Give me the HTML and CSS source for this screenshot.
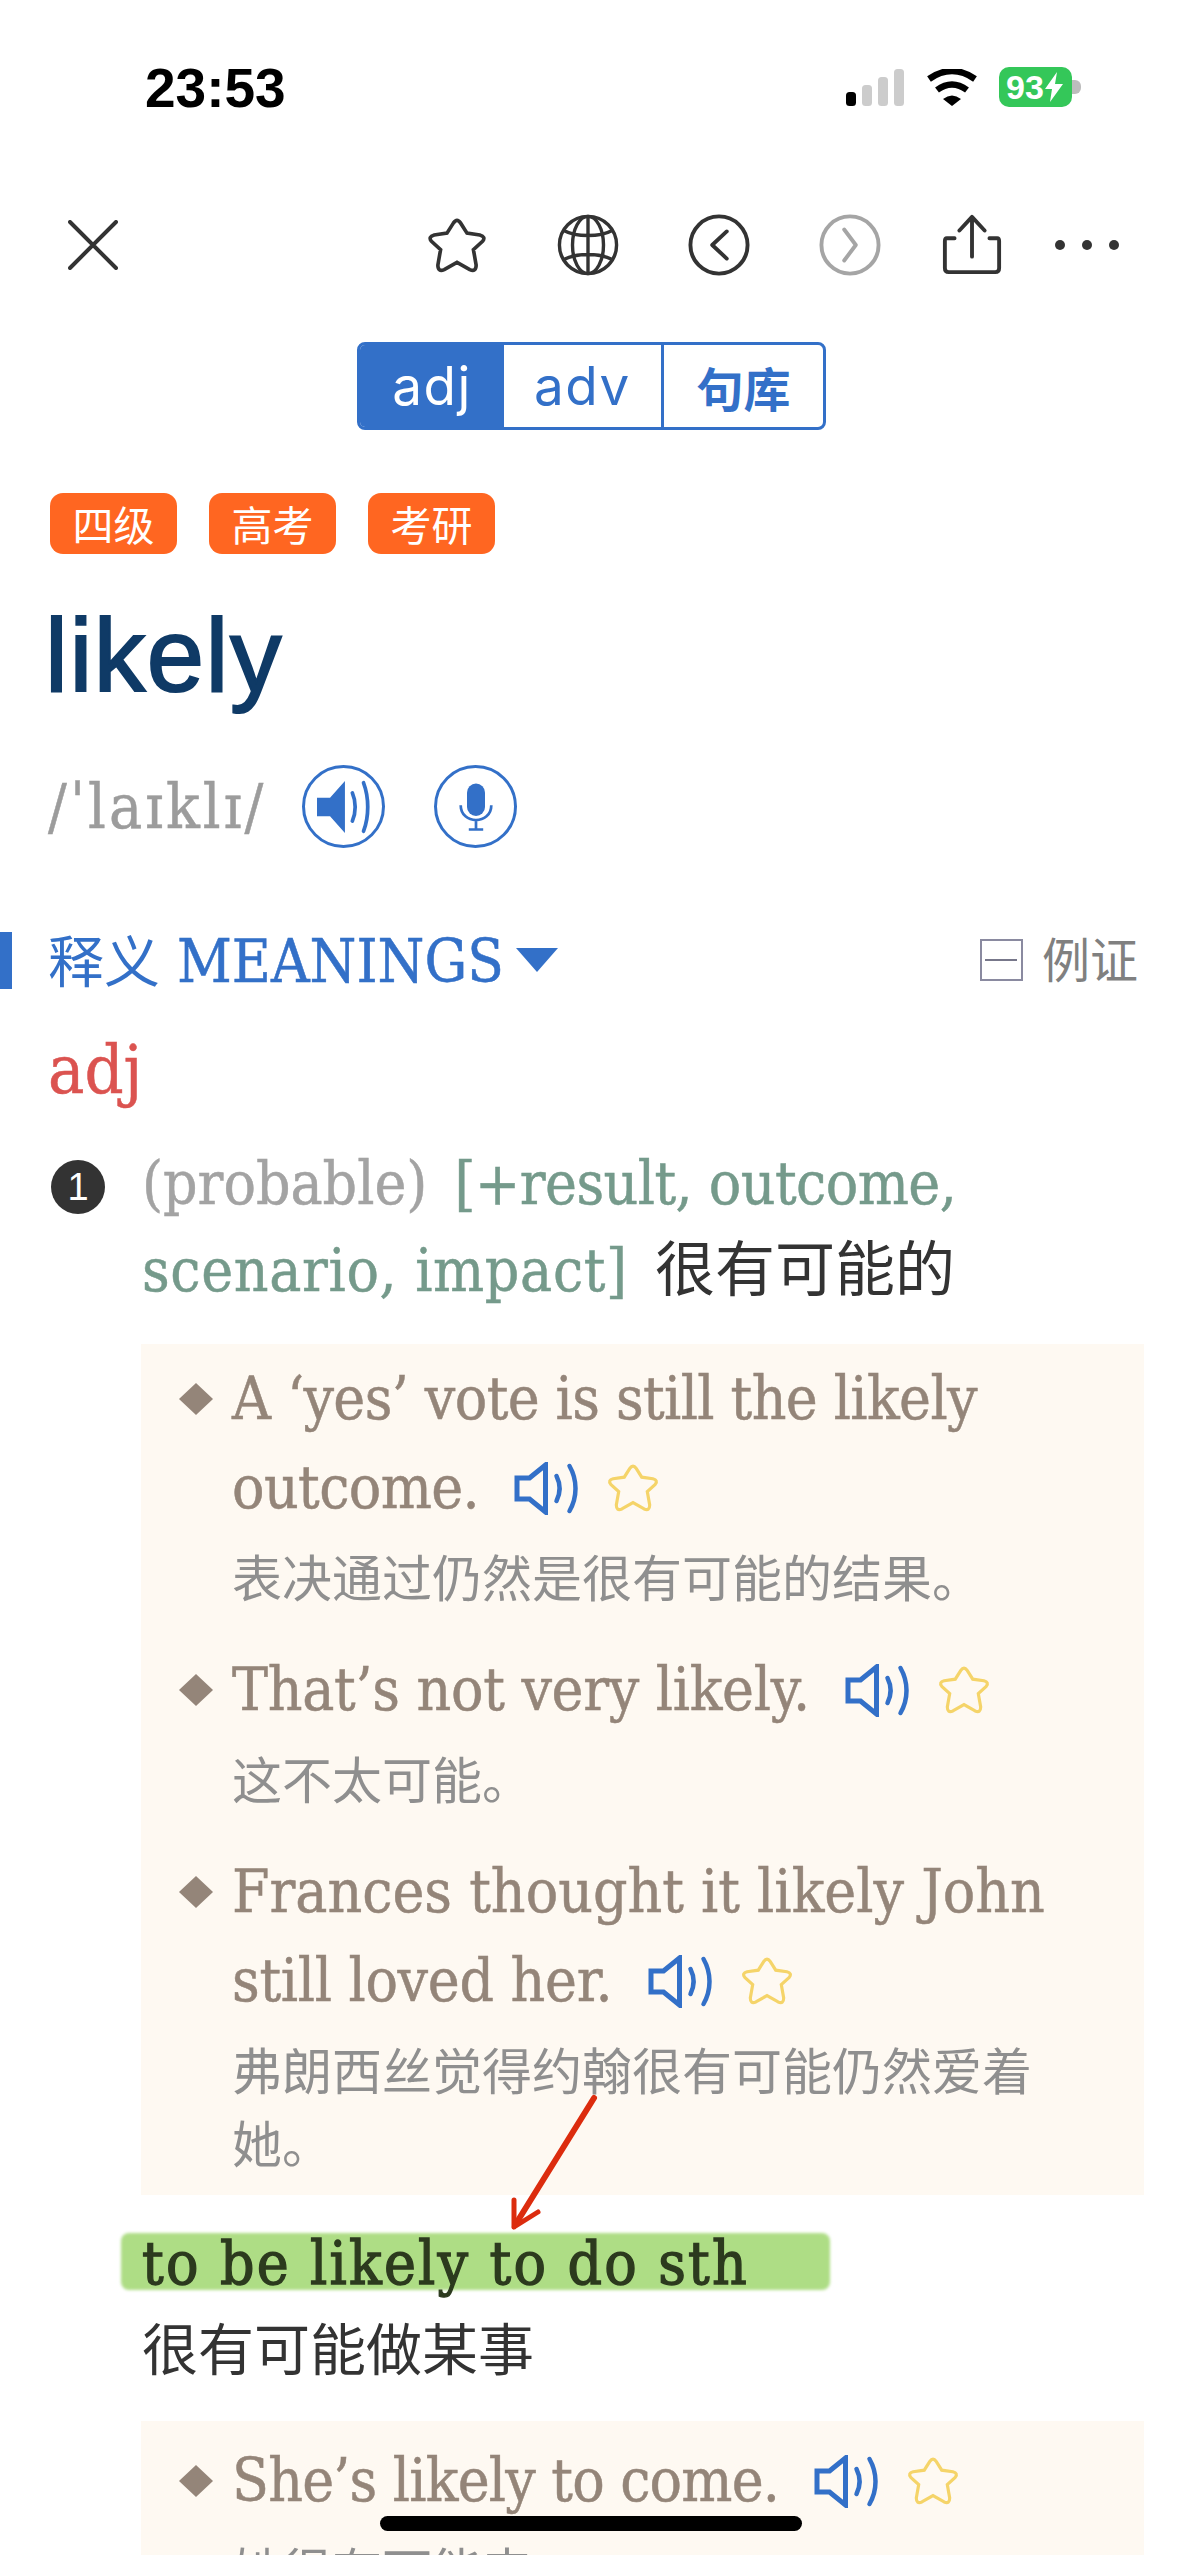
FILE: index.html
```html
<!DOCTYPE html>
<html lang="en">
<head>
    <meta charset="UTF-8">
    <title>likely</title>
    <link rel="stylesheet" href="styles.css">
</head>
<body>

<svg class="defs" width="0" height="0">
    <symbol id="speaker" viewBox="0 0 64 53">
        <path d="M2.5 16H15L31 3V50L15 37H2.5Z" fill="none" stroke="currentColor" stroke-width="5"/>
        <path d="M42 14C46 22 46 31 42 39" fill="none" stroke="currentColor" stroke-width="4.5" stroke-linecap="round"/>
        <path d="M55 4C63 18 63 35 55 49" fill="none" stroke="currentColor" stroke-width="4.5" stroke-linecap="round"/>
    </symbol>
    <symbol id="star" viewBox="-2 -2 68 64">
        <path d="M28 6Q32 0 36 6L43 17L57 19Q64 21 60 26L50 35L53 52Q53 60 46 57L32 49L18 57Q11 60 11 52L14 35L4 26Q0 21 7 19L21 17Z" fill="none" stroke="currentColor" stroke-width="4"/>
    </symbol>
</svg>

<!--状态栏-->
<div class="status-bar">
    <span class="clock">23:53</span>
    <div class="status-icons">
        <svg class="signal" viewBox="0 0 58 37">
            <rect x="0" y="23" width="10" height="14" rx="3.5" fill="#000"/>
            <rect x="16" y="16" width="10" height="21" rx="3.5" fill="#cccccc"/>
            <rect x="32" y="8" width="10" height="29" rx="3.5" fill="#cccccc"/>
            <rect x="48" y="0" width="10" height="37" rx="3.5" fill="#cccccc"/>
        </svg>
        <svg class="wifi" viewBox="0 0 50 37">
            <path d="M2 10Q25 -6 48 10" fill="none" stroke="#000" stroke-width="6.5"/>
            <path d="M10 21Q25 10 40 21" fill="none" stroke="#000" stroke-width="6.5"/>
            <path d="M16 30Q25 23 34 30L25 37Z" fill="#000"/>
        </svg>
        <div class="battery"><span class="battery-num">93</span><svg class="bolt" viewBox="0 0 18 30"><path d="M12 0L0 17H7L5 30L18 12H10Z" fill="#fff"/></svg></div>
        <span class="battery-nub"></span>
    </div>
</div>

<!--工具栏-->
<div class="toolbar">
    <svg class="tool-close" viewBox="0 0 50 50"><path d="M2 2L48 48M48 2L2 48" stroke="#333" stroke-width="4" stroke-linecap="round"/></svg>
    <div class="tools">
        <svg class="tool-icon tool-star"><use href="#star" color="#333"/></svg>
        <svg class="tool-icon" viewBox="0 0 64 64">
            <g fill="none" stroke="#333" stroke-width="3.5">
                <circle cx="32" cy="32" r="29.5"/>
                <ellipse cx="32" cy="32" rx="16" ry="29.5"/>
                <path d="M32 3V61M7 17C20 24 44 24 57 17M7 47C20 40 44 40 57 47"/>
            </g>
        </svg>
        <svg class="tool-icon" viewBox="0 0 64 64">
            <circle cx="32" cy="32" r="29.5" fill="none" stroke="#333" stroke-width="4"/>
            <path d="M40 18L25 32L40 46" fill="none" stroke="#333" stroke-width="4" stroke-linecap="round" stroke-linejoin="round"/>
        </svg>
        <svg class="tool-icon tool-next" viewBox="0 0 64 64">
            <circle cx="32" cy="32" r="29.5" fill="none" stroke="#a5a5a5" stroke-width="4"/>
            <path d="M26 16L38 32L26 48" fill="none" stroke="#a5a5a5" stroke-width="4" stroke-linecap="round" stroke-linejoin="round"/>
        </svg>
        <svg class="tool-icon tool-share" viewBox="0 0 64 64">
            <path d="M14 25H6C4 25 4 26 4 28V56C4 59 6 60 8 60H56C58 60 60 59 60 56V28C60 26 60 25 58 25H50" fill="none" stroke="#333" stroke-width="4" stroke-linecap="round"/>
            <path d="M32 44V3M19 17L32 3L45 17" fill="none" stroke="#333" stroke-width="4" stroke-linecap="round" stroke-linejoin="round"/>
        </svg>
        <div class="tool-dots"><i></i><i></i><i></i></div>
    </div>
</div>

<!--词性切换-->
<div class="seg-wrap">
    <div class="seg">
        <span class="seg-item seg-on">adj</span>
        <span class="seg-item seg-mid">adv</span>
        <span class="seg-item seg-last">句库</span>
    </div>
</div>

<div class="tags">
    <span class="tag">四级</span>
    <span class="tag">高考</span>
    <span class="tag">考研</span>
</div>

<h1 class="word">likely</h1>

<div class="phonetic">
    <span class="phonetic-text">/ˈlaɪklɪ/</span>
    <span class="round-btn">
        <svg class="round-speaker" viewBox="0 0 58 60">
            <path d="M0 20H14L30 2V58L14 40H0Z" fill="#3370c8"/>
            <path d="M38 15C42 24 42 36 38 45M50 4C56 20 56 40 50 56" fill="none" stroke="#3370c8" stroke-width="4" stroke-linecap="round"/>
        </svg>
    </span>
    <span class="round-btn round-mic">
        <svg class="round-mic-icon" viewBox="0 0 40 52">
            <rect x="10" y="0" width="20" height="36" rx="10" fill="#3370c8"/>
            <path d="M3 24C3 46 37 46 37 24M20 41V51M12 51H28" fill="none" stroke="#3370c8" stroke-width="3"/>
        </svg>
    </span>
</div>

<!--释义标题-->
<div class="section-head">
    <span class="section-bar"></span>
    <span class="section-title"><span class="section-zh">释义</span> MEANINGS</span>
    <span class="section-arrow"></span>
    <span class="section-fold"><span class="fold-box"></span>例证</span>
</div>

<div class="pos">adj</div>

<div class="sense">
    <span class="sense-num">1</span>
    <p class="sense-text"><span class="gray">(probable)</span> <span class="green green-first">[+result, outcome,</span><br><span class="green green-second">scenario, impact]</span> <span class="zh">很有可能的</span></p>
</div>

<div class="examples">
    <div class="example">
        <span class="diamond"></span>
        <div>
            <p class="en"><span class="tight-b">A ‘yes’ vote is still the likely<br>outcome.</span> <svg class="ic-speaker"><use href="#speaker"/></svg><svg class="ic-star"><use href="#star"/></svg></p>
            <p class="cn">表决通过仍然是很有可能的结果。</p>
        </div>
    </div>
    <div class="example">
        <span class="diamond"></span>
        <div>
            <p class="en"><span class="tight-a">That’s not very likely.</span> <svg class="ic-speaker"><use href="#speaker"/></svg><svg class="ic-star"><use href="#star"/></svg></p>
            <p class="cn">这不太可能。</p>
        </div>
    </div>
    <div class="example">
        <span class="diamond"></span>
        <div>
            <p class="en">Frances thought it likely John<br><span class="tight-a">still loved her.</span> <svg class="ic-speaker"><use href="#speaker"/></svg><svg class="ic-star"><use href="#star"/></svg></p>
            <p class="cn">弗朗西丝觉得约翰很有可能仍然爱着<br>她。</p>
        </div>
    </div>
</div>

<div class="phrase">
    <p class="phrase-en"><span class="phrase-mark"></span><span class="phrase-word">to be likely to do sth</span></p>
    <p class="phrase-zh">很有可能做某事</p>
</div>

<div class="examples examples-last">
    <div class="example">
        <span class="diamond"></span>
        <div>
            <p class="en"><span class="tight-c">She’s likely to come.</span> <svg class="ic-speaker"><use href="#speaker"/></svg><svg class="ic-star"><use href="#star"/></svg></p>
            <p class="cn">她很有可能来。</p>
        </div>
    </div>
</div>

<!--红色箭头-->
<svg class="arrow" viewBox="0 0 100 145">
    <path d="M89 8L12 132" fill="none" stroke="#dc2c0e" stroke-width="6" stroke-linecap="round"/>
    <path d="M9 137L9 110M9 137L33 122" fill="none" stroke="#dc2c0e" stroke-width="5" stroke-linecap="round"/>
</svg>

<div class="home-bar"></div>

</body>
</html>
```

FILE: styles.css
```css
* {
    margin: 0;
    padding: 0;
    box-sizing: border-box;
}

html, body {
    width: 1179px;
    height: 2555px;
    overflow: hidden;
}

body {
    position: relative;
    background-color: #fff;
    font-family: "DejaVu Serif", "Noto Sans CJK SC", serif;
    font-stretch: condensed;
}

.defs {
    position: absolute;
}

/*状态栏*/
.status-bar {
    height: 175px;
    display: flex;
    justify-content: space-between;
    padding: 57px 98px 0 145px;
}

.clock {
    font-family: "Liberation Sans", sans-serif;
    font-size: 55px;
    font-weight: bold;
    line-height: 62px;
    font-stretch: normal;
    color: #000;
}

.status-icons {
    height: 40px;
    margin-top: 10px;
    display: flex;
    align-items: center;
}

.signal {
    width: 58px;
    height: 37px;
    margin-right: 23px;
}

.wifi {
    width: 50px;
    height: 37px;
    margin-right: 22px;
}

.battery {
    width: 73px;
    height: 40px;
    border-radius: 10px;
    background-color: #34c759;
    display: flex;
    align-items: center;
    padding-left: 7px;
}

.battery-num {
    font-family: "Liberation Sans", sans-serif;
    font-size: 34px;
    font-weight: bold;
    font-stretch: normal;
    color: #fff;
}

.bolt {
    width: 18px;
    height: 30px;
    margin-left: 1px;
}

.battery-nub {
    width: 9px;
    height: 14px;
    background-color: #bdbdbd;
    border-radius: 0 6px 6px 0;
}

/*工具栏*/
.toolbar {
    height: 140px;
    padding: 0 60px 0 68px;
    display: flex;
    align-items: center;
    justify-content: space-between;
}

.tool-close {
    width: 50px;
    height: 50px;
}

.tools {
    display: flex;
    align-items: center;
}

.tool-icon {
    width: 62px;
    height: 62px;
    margin-right: 69px;
}

.tool-next {
    margin-right: 60px;
}

.tool-share {
    margin-right: 52px;
}

.tool-dots {
    display: flex;
    gap: 17px;
}

.tool-dots i {
    width: 10px;
    height: 10px;
    border-radius: 50%;
    background-color: #333;
}

/*词性切换*/
.seg-wrap {
    margin-top: 27px;
    padding-left: 357px;
}

.seg {
    width: 469px;
    height: 88px;
    border: 3px solid #3370c8;
    border-radius: 8px;
    display: flex;
    color: #3370c8;
    font-family: "Inter", "Noto Sans CJK SC", sans-serif;
    font-stretch: normal;
    font-size: 53px;
    overflow: hidden;
}

.seg-item {
    display: flex;
    align-items: center;
    justify-content: center;
}

.seg-on {
    width: 144px;
    background-color: #3370c8;
    color: #fff;
    letter-spacing: 1.5px;
}

.seg-mid {
    width: 160px;
    border-right: 3px solid #3370c8;
    letter-spacing: 1.5px;
}

.seg-last {
    flex: 1;
    font-weight: bold;
    font-size: 47px;
}

/*标签*/
.tags {
    margin-top: 63px;
    padding-left: 50px;
    display: flex;
    gap: 32px;
}

.tag {
    width: 127px;
    height: 61px;
    border-radius: 13px;
    background-color: #ff6621;
    color: #fff;
    font-family: "Noto Sans CJK SC", sans-serif;
    font-stretch: normal;
    font-size: 41px;
    line-height: 61px;
    text-align: center;
}

.word {
    margin-top: 42px;
    padding-left: 45px;
    font-family: "Liberation Sans", sans-serif;
    font-stretch: normal;
    font-weight: normal;
    font-size: 103px;
    line-height: 120px;
    letter-spacing: 1.5px;
    color: #0f3a66;
    -webkit-text-stroke: 2px #0f3a66;
}

/*音标*/
.phonetic {
    margin-top: 49px;
    padding-left: 48px;
    height: 83px;
    display: flex;
    align-items: center;
}

.phonetic-text {
    width: 254px;
    font-family: "DejaVu Serif", serif;
    font-size: 62px;
    letter-spacing: 3px;
    color: #9c9c9c;
    -webkit-text-stroke: 0.5px #9c9c9c;
}

.round-btn {
    width: 83px;
    height: 83px;
    border: 3px solid #3370c8;
    border-radius: 50%;
    display: flex;
    align-items: center;
    justify-content: center;
}

.round-mic {
    margin-left: 49px;
}

.round-speaker {
    width: 54px;
    height: 56px;
}

.round-mic-icon {
    width: 36px;
    height: 50px;
}

/*释义标题*/
.section-head {
    margin-top: 82px;
    height: 60px;
    padding-right: 41px;
    display: flex;
    align-items: center;
    color: #3370c8;
}

.section-bar {
    width: 12px;
    height: 57px;
    background-color: #3370c8;
    margin-right: 36px;
}

.section-title {
    padding-top: 4px;
    font-size: 59.5px;
    line-height: 60px;
    -webkit-text-stroke: 0.5px #3370c8;
}

.section-zh {
    font-size: 56px;
    -webkit-text-stroke: 0;
}

.section-arrow {
    margin-left: 12px;
    border-left: 21px solid transparent;
    border-right: 21px solid transparent;
    border-top: 24px solid #3370c8;
}

.section-fold {
    margin-left: auto;
    margin-bottom: 6px;
    display: flex;
    align-items: center;
    font-family: "Noto Sans CJK SC", sans-serif;
    font-stretch: normal;
    font-size: 48px;
    color: #808080;
}

.fold-box {
    width: 43px;
    height: 42px;
    margin-top: 6px;
    margin-right: 19px;
    border: 2px solid #8a8aa0;
    background: linear-gradient(#77778a, #77778a) center / 32px 2px no-repeat;
}

.pos {
    margin-top: 40px;
    padding-left: 48px;
    font-size: 68px;
    line-height: 80px;
    color: #db5350;
    -webkit-text-stroke: 0.5px #db5350;
}

/*义项*/
.sense {
    margin-top: 30px;
    padding-left: 51px;
    display: flex;
}

.sense-num {
    width: 54px;
    height: 54px;
    margin-top: 20px;
    margin-right: 37px;
    border-radius: 50%;
    background-color: #333;
    color: #fff;
    font-family: "Liberation Sans", sans-serif;
    font-stretch: normal;
    font-size: 38px;
    line-height: 54px;
    text-align: center;
}

.sense-text {
    font-size: 60px;
    line-height: 87px;
    -webkit-text-stroke: 0.5px;
}

.gray {
    color: #a3a3a3;
}

.green {
    color: #759a8b;
}

.green-first {
    margin-left: 10px;
    letter-spacing: -0.55px;
}

.green-second {
    letter-spacing: 0.65px;
}

.zh {
    margin-left: 10px;
    font-family: "Noto Sans CJK SC", sans-serif;
    font-stretch: normal;
    font-size: 60px;
    line-height: 1;
    color: #333;
    -webkit-text-stroke: 0;
}

/*例句*/
.examples {
    margin: 30px 35px 0 141px;
    background-color: #fef9f2;
    padding: 10px 0 0 38px;
    height: 851px;
}

.example {
    display: flex;
    margin-bottom: 33px;
}

.diamond {
    width: 34px;
    height: 32px;
    margin: 29px 19px 0 0;
    flex-shrink: 0;
    background-color: #948579;
    clip-path: polygon(50% 0, 100% 50%, 50% 100%, 0 50%);
}

.en {
    font-size: 60px;
    line-height: 89px;
    color: #948579;
    -webkit-text-stroke: 0.5px #948579;
}

.tight-a {
    letter-spacing: -0.3px;
}

.tight-b {
    letter-spacing: -0.6px;
}

.tight-c {
    letter-spacing: -0.8px;
}

.cn {
    margin-top: 7px;
    font-family: "Noto Sans CJK SC", sans-serif;
    font-stretch: normal;
    font-size: 50px;
    line-height: 73px;
    color: #8f8f8f;
}

.ic-speaker {
    width: 65px;
    height: 53px;
    margin-left: 18px;
    margin-right: 27px;
    vertical-align: -7px;
    color: #3370c8;
}

.ic-star {
    width: 54px;
    height: 51px;
    vertical-align: -5px;
    color: #f5d469;
}

/*词组*/
.phrase {
    margin-top: 30px;
    padding-left: 142px;
}

.phrase-en {
    position: relative;
    font-size: 60px;
    line-height: 77px;
    letter-spacing: 2.2px;
    color: #2c3a1e;
    -webkit-text-stroke: 1.3px #2c3a1e;
}

.phrase-word {
    position: relative;
}

.phrase-mark {
    position: absolute;
    left: -21px;
    top: 8px;
    width: 709px;
    height: 57px;
    background-color: #aedd85;
    border-radius: 8px;
    filter: blur(1.5px);
}

.phrase-zh {
    font-family: "Noto Sans CJK SC", sans-serif;
    font-stretch: normal;
    font-size: 56px;
    line-height: 88px;
    color: #333;
}

.examples-last {
    margin-top: 31px;
    padding-top: 15px;
}

/*覆盖层*/
.arrow {
    position: absolute;
    left: 505px;
    top: 2090px;
    width: 100px;
    height: 145px;
}

.home-bar {
    position: absolute;
    left: 380px;
    top: 2516px;
    width: 422px;
    height: 15px;
    border-radius: 8px;
    background-color: #000;
}
```
